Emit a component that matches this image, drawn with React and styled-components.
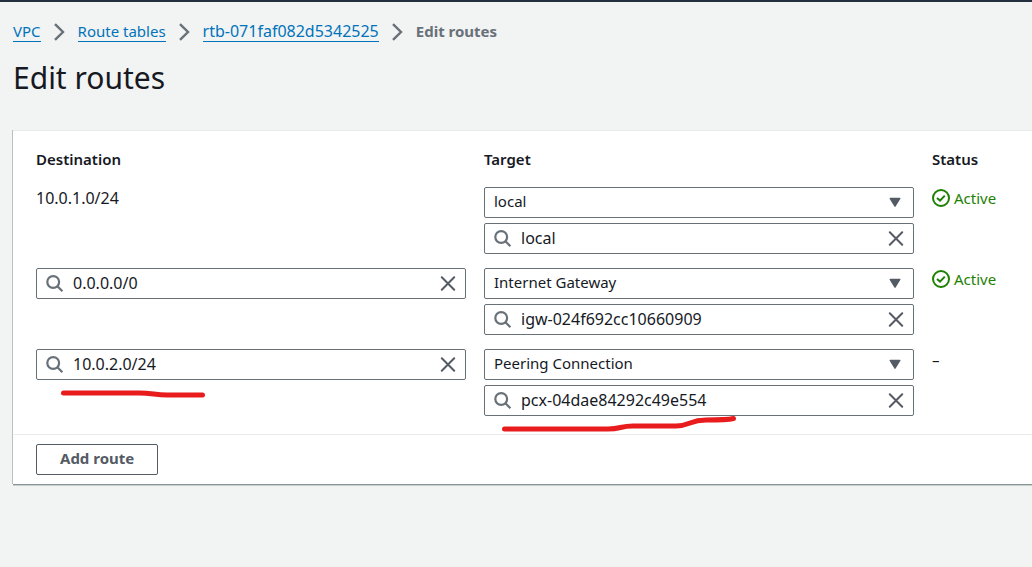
import React from "react";
import styled, { createGlobalStyle } from "styled-components";

const GlobalStyle = createGlobalStyle`
  *, *::before, *::after { box-sizing: border-box; }
  body {
    margin: 0;
    background: #f2f3f3;
    color: #16191f;
    font-family: "Noto Sans", "Open Sans", sans-serif;
    font-size: 15px;
    line-height: 20px;
  }
  button, input, select { font: inherit; color: inherit; margin: 0; }
`;

const Page = styled.div`
  min-height: 100vh;
  border-top: 2px solid #232f3e;
  padding: 20px 0 24px 13px;
`;

const Crumbs = styled.ol`
  display: flex;
  align-items: center;
  gap: 13px;
  list-style: none;
  margin: 0;
  padding: 0;
`;

const Crumb = styled.li`
  display: flex;
  align-items: center;
  gap: 13px;
  height: 20px;
  color: #687078;
  font-size: ${(p) => (p.$id ? "16px" : "15px")};
  line-height: 18px;
`;

const CrumbLink = styled.a`
  color: #0073bb;
  text-decoration: none;
  border-bottom: 1px solid #0073bb;
  height: 20px;
`;

const CrumbCurrent = styled.span`
  height: 20px;
  font-weight: 700;
`;

const Title = styled.h1`
  margin: 17px 0 33px;
  font-size: 30px;
  line-height: 38px;
  font-weight: 400;
`;

const Panel = styled.form`
  background: #fff;
  border-top: 1px solid #e6eaea;
  box-shadow: -1px 0 0 0 #b8c0c0, 0 1px 0 0 #879596, 0 2px 0 0 #c9cfcf;
`;

const TableArea = styled.div`
  padding-left: 23px;
`;

const RoutesTable = styled.table`
  width: 100%;
  table-layout: fixed;
  border-collapse: collapse;
`;

const HeadCell = styled.th`
  width: ${(p) => p.$width || "auto"};
  padding: 18px 18px 18px 0;
  text-align: left;
  font-weight: 600;
`;

const Cell = styled.td`
  position: relative;
  height: 81px;
  padding: 0 18px 14px 0;
  vertical-align: top;
  &:last-child { padding-right: 0; }
`;

const Plain = styled.div`
  font-size: 16px;
  line-height: 22px;
`;

const Status = styled.div`
  display: flex;
  align-items: center;
  gap: 4px;
  line-height: 22px;
  color: ${(p) => (p.$active ? "#1d8102" : "#16191f")};
`;

const Stack = styled.div`
  display: grid;
  gap: 5px;
`;

const Field = styled.div`
  display: flex;
  align-items: center;
  height: 31px;
  border: 1px solid #687078;
  border-radius: 2px;
  background: #fff;
  position: relative;
`;

const TextInput = styled.input`
  flex: 1;
  min-width: 0;
  height: 29px;
  padding: 0 9px 2px;
  border: 0;
  outline: 0;
  background: transparent;
  font-size: 16px;
`;

const Glyph = styled.svg`
  flex: none;
  display: block;
`;

const SearchGlyph = styled(Glyph)`
  margin-left: 9px;
`;

const ClearButton = styled.button`
  display: flex;
  align-items: center;
  padding: 0;
  margin-right: 9px;
  border: 0;
  background: transparent;
  cursor: pointer;
`;

const Select = styled.select`
  appearance: none;
  width: 100%;
  height: 29px;
  padding: 0 32px 3px 9px;
  border: 0;
  outline: 0;
  background: transparent;
`;

const Caret = styled(Glyph)`
  position: absolute;
  right: 12px;
  top: 9px;
  pointer-events: none;
`;

const Marker = styled.svg`
  position: absolute;
  left: ${(p) => p.$left};
  top: ${(p) => p.$top};
  pointer-events: none;
`;

const PanelFooter = styled.div`
  margin-top: 4px;
  border-top: 1px solid #eaeded;
  padding: 9px 23px;
`;

const AddButton = styled.button`
  display: block;
  height: 31px;
  padding: 0 23px 3px;
  border: 1px solid #545b64;
  border-radius: 2px;
  background: #fff;
  color: #545b64;
  font-weight: 700;
  line-height: 20px;
  cursor: pointer;
`;

function Chevron() {
  return (
    <Glyph width="11" height="18" viewBox="0 0 11 18" fill="none" stroke="#687078" strokeWidth="2.4" aria-hidden="true">
      <path d="M1 1.2 9 9 1 16.8" />
    </Glyph>
  );
}

function SearchField({ label, value }) {
  return (
    <Field>
      <SearchGlyph width="18" height="18" viewBox="0 0 18 18" fill="none" stroke="#687078" strokeWidth="2.2" aria-hidden="true">
        <circle cx="7.2" cy="7" r="5.9" />
        <path d="M11.4 11.2 16.4 16.2" />
      </SearchGlyph>
      <TextInput type="text" aria-label={label} defaultValue={value} />
      <ClearButton type="button" aria-label={`Clear ${label}`}>
        <Glyph width="16" height="16" viewBox="0 0 16 16" fill="none" stroke="#545b64" strokeWidth="2" strokeLinecap="round">
          <path d="M1.8 1.3 14.2 13.7M14.2 1.3 1.8 13.7" />
        </Glyph>
      </ClearButton>
    </Field>
  );
}

function SelectField({ label, value }) {
  return (
    <Field>
      <Select aria-label={label} defaultValue={value}>
        <option>local</option>
        <option>Internet Gateway</option>
        <option>Peering Connection</option>
      </Select>
      <Caret width="12" height="11" viewBox="0 0 12 11" aria-hidden="true">
        <path d="M1.2 1.5H10.8L6 9.2Z" fill="#545b64" stroke="#545b64" strokeWidth="1.4" strokeLinejoin="round" />
      </Caret>
    </Field>
  );
}

function ActiveGlyph() {
  return (
    <Glyph width="18" height="18" viewBox="0 0 18 18" fill="none" stroke="#1d8102" strokeWidth="2" aria-hidden="true">
      <circle cx="9" cy="9" r="8" />
      <path d="M5 9 8 11.6 12.8 6.6" />
    </Glyph>
  );
}

const crumbs = [
  { name: "VPC" },
  { name: "Route tables" },
  { name: "rtb-071faf082d5342525", id: true },
];

const routes = [
  { destination: "10.0.1.0/24", fixed: true, kind: "local", target: "local", active: true },
  { destination: "0.0.0.0/0", kind: "Internet Gateway", target: "igw-024f692cc10660909", active: true },
  { destination: "10.0.2.0/24", kind: "Peering Connection", target: "pcx-04dae84292c49e554", marked: true },
];

export default function App() {
  return (
    <>
      <GlobalStyle />
      <Page>
        <nav aria-label="Breadcrumbs">
          <Crumbs>
            {crumbs.map(({ name, id }) => (
              <Crumb key={name} $id={id}>
                <CrumbLink href="#">{name}</CrumbLink>
                <Chevron />
              </Crumb>
            ))}
            <Crumb aria-current="page">
              <CrumbCurrent>Edit routes</CrumbCurrent>
            </Crumb>
          </Crumbs>
        </nav>
        <Title>Edit routes</Title>
        <Panel>
          <TableArea>
            <RoutesTable>
              <thead>
                <tr>
                  <HeadCell>Destination</HeadCell>
                  <HeadCell>Target</HeadCell>
                  <HeadCell $width="100px">Status</HeadCell>
                </tr>
              </thead>
              <tbody>
                {routes.map((r) => (
                  <tr key={r.destination}>
                    <Cell>
                      {r.fixed ? <Plain>{r.destination}</Plain> : <SearchField label="Destination" value={r.destination} />}
                      {r.marked && (
                        <Marker $left="23px" $top="38px" width="150" height="14" viewBox="0 0 150 14" fill="none" stroke="#e81c1c" strokeWidth="5" strokeLinecap="round" aria-hidden="true">
                          <path d="M4.5 6H80C93 6 96 8 108 8H143.5" />
                        </Marker>
                      )}
                    </Cell>
                    <Cell>
                      <Stack>
                        <SelectField label="Target type" value={r.kind} />
                        <SearchField label="Target" value={r.target} />
                      </Stack>
                      {r.marked && (
                        <Marker $left="16px" $top="64px" width="240" height="22" viewBox="0 0 240 22" fill="none" stroke="#e81c1c" strokeWidth="5" strokeLinecap="round" aria-hidden="true">
                          <path d="M4.5 16H108C121 16 120 13 133 13H176C189 13 190 7 206 7C218 7 227 7 233.5 5.5" />
                        </Marker>
                      )}
                    </Cell>
                    <Cell>
                      <Status $active={r.active}>
                        {r.active ? <><ActiveGlyph />Active</> : "–"}
                      </Status>
                    </Cell>
                  </tr>
                ))}
              </tbody>
            </RoutesTable>
          </TableArea>
          <PanelFooter>
            <AddButton type="button">Add route</AddButton>
          </PanelFooter>
        </Panel>
      </Page>
    </>
  );
}
